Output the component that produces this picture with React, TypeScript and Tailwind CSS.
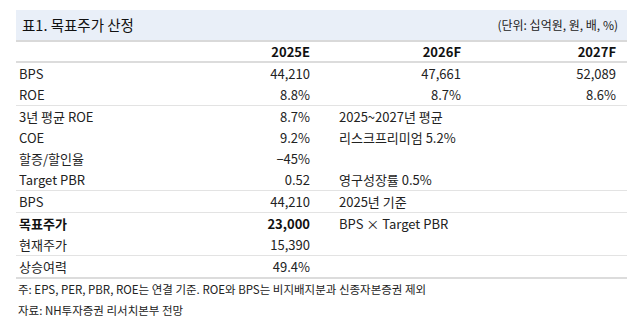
import React from "react";

const font = { fontFamily: '"Noto Sans CJK KR", "Noto Sans", sans-serif' };

type Row = { a: string; b: string; c?: string; d?: string; bold?: boolean };

function R({ a, b, c = "", bold }: Row) {
  return (
    <div className="grid grid-cols-[186px_116px_152px_157px] h-[21px] items-center text-[13px] text-[#222]">
      <div className={`pl-[3px] whitespace-nowrap ${bold ? "font-bold text-[#111]" : ""}`}>{a}</div>
      <div className={`pr-[8px] text-right whitespace-nowrap ${bold ? "font-bold text-[#111]" : ""}`}>{b}</div>
      <div className="pl-[21px] pr-[9px] whitespace-nowrap text-left">{c}</div>
      <div className="pr-[11px] text-right whitespace-nowrap"></div>
    </div>
  );
}

function R2({ a, b, c = "", d = "" }: Row) {
  return (
    <div className="grid grid-cols-[186px_116px_152px_157px] h-[21px] items-center text-[13px] text-[#222]">
      <div className="pl-[3px] whitespace-nowrap">{a}</div>
      <div className="pr-[8px] text-right whitespace-nowrap">{b}</div>
      <div className="pr-[9px] text-right whitespace-nowrap">{c}</div>
      <div className="pr-[11px] text-right whitespace-nowrap">{d}</div>
    </div>
  );
}

export default function App() {
  return (
    <div className="w-[641px] h-[325px] bg-white pt-[10px] pl-[16px]" style={font}>
      <div className="w-[611px]">
        <div className="h-[32px] bg-[#e9eff8] flex items-center justify-between border-b-2 border-[#d9d9d9]">
          <span className="pl-[6px] text-[14.5px] text-[#111] font-normal">표1. 목표주가 산정</span>
          <span className="pr-[9px] text-[12px] text-[#222]">(단위: 십억원, 원, 배, %)</span>
        </div>
        <div className="grid grid-cols-[186px_116px_152px_157px] h-[21px] items-center text-[13px] text-[#111] font-semibold border-b-2 border-[#dcdcdc]">
          <div></div>
          <div className="pr-[8px] text-right">2025E</div>
          <div className="pr-[9px] text-right">2026F</div>
          <div className="pr-[11px] text-right">2027F</div>
        </div>
        <div className="border-b border-[#e3e3e3]">
          <R2 a="BPS" b="44,210" c="47,661" d="52,089" />
          <R2 a="ROE" b="8.8%" c="8.7%" d="8.6%" />
        </div>
        <div className="border-b border-[#e3e3e3]">
          <R a="3년 평균 ROE" b="8.7%" c="2025~2027년 평균" />
          <R a="COE" b="9.2%" c="리스크프리미엄 5.2%" />
          <R a="할증/할인율" b="−45%" />
          <R a="Target PBR" b="0.52" c="영구성장률 0.5%" />
        </div>
        <div className="border-b border-[#e3e3e3]">
          <R a="BPS" b="44,210" c="2025년 기준" />
        </div>
        <div className="border-b border-[#e3e3e3]">
          <R a="목표주가" b="23,000" c="BPS × Target PBR" bold />
          <R a="현재주가" b="15,390" />
        </div>
        <div className="border-b-2 border-[#dcdcdc]">
          <R a="상승여력" b="49.4%" />
        </div>
        <div className="pl-[2px] text-[11.5px] text-[#222]">
          <div className="h-[21px] flex items-center whitespace-nowrap">주: EPS, PER, PBR, ROE는 연결 기준. ROE와 BPS는 비지배지분과 신종자본증권 제외</div>
          <div className="h-[21px] flex items-center whitespace-nowrap">자료: NH투자증권 리서치본부 전망</div>
        </div>
      </div>
    </div>
  );
}
